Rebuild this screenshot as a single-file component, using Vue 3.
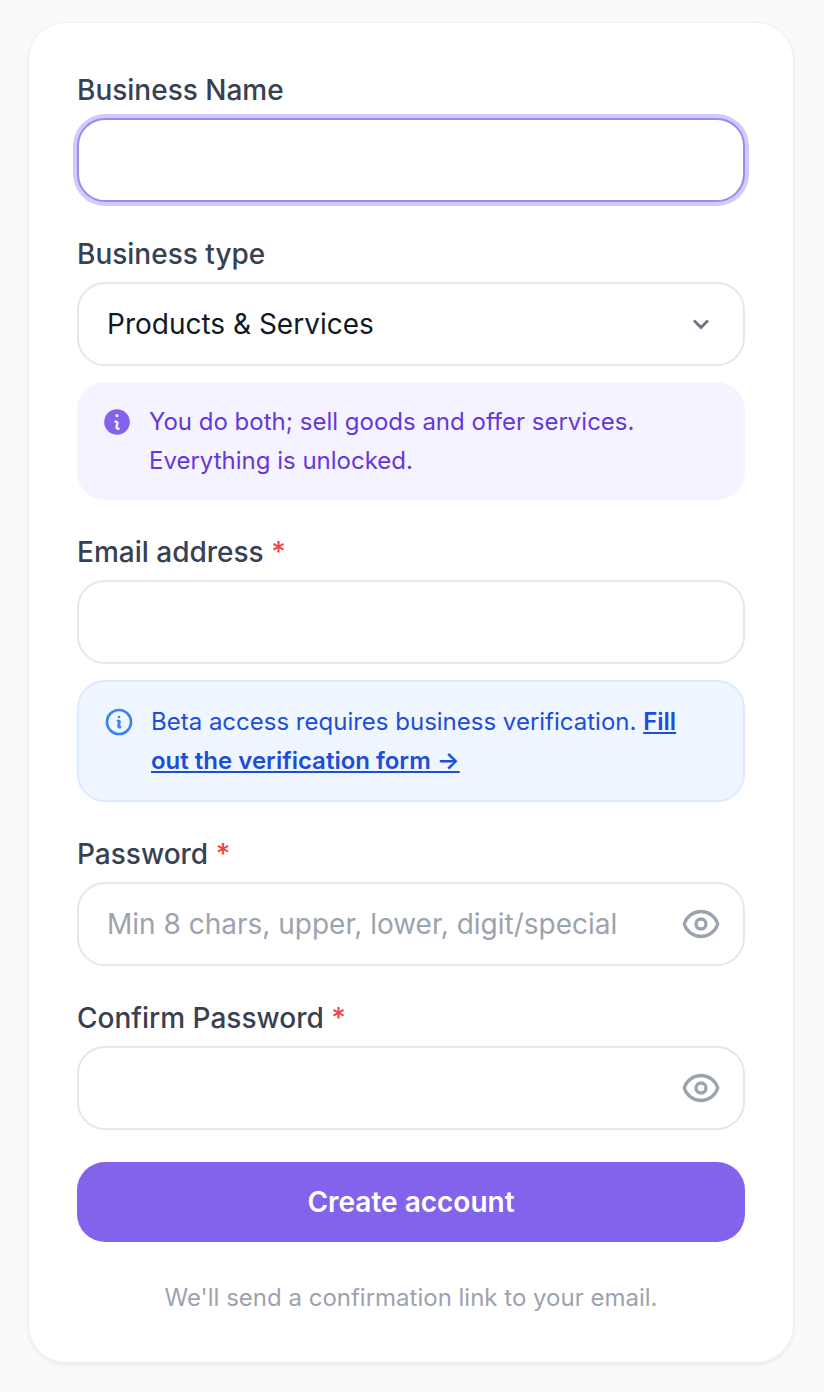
<script setup>
const eyeOuter = "M2.036 12.322a1.012 1.012 0 010-.639C3.423 7.51 7.36 4.5 12 4.5c4.638 0 8.573 3.007 9.963 7.178.07.207.07.431 0 .639C20.577 16.49 16.64 19.5 12 19.5c-4.638 0-8.573-3.007-9.963-7.178z";
const eyeInner = "M15 12a3 3 0 11-6 0 3 3 0 016 0z";
</script>

<template>
  <div class="page">
    <form class="card" @submit.prevent>
      <div class="field">
        <label class="label">Business Name</label>
        <div class="input focused"></div>
      </div>

      <div class="field">
        <label class="label">Business type</label>
        <div class="input select">
          <span>Products &amp; Services</span>
          <svg class="chevron" viewBox="0 0 18 12" fill="none">
            <path d="M2 2.500l7 7 7-7" stroke="#6b7280" stroke-width="2.800" />
          </svg>
        </div>
        <div class="alert purple">
          <svg class="alert-icon" viewBox="0 0 20 20" fill="#8463ec">
            <path
              fill-rule="evenodd"
              clip-rule="evenodd"
              d="M18 10a8 8 0 11-16 0 8 8 0 0116 0zm-7-4a1 1 0 11-2 0 1 1 0 012 0zM9 9a.75.75 0 000 1.5h.253a.25.25 0 01.244.304l-.459 2.066A1.75 1.75 0 0010.747 15H11a.75.75 0 000-1.5h-.253a.25.25 0 01-.244-.304l.459-2.066A1.75 1.75 0 009.253 9H9z"
            />
          </svg>
          <p>You do both; sell goods and offer services.<br />Everything is unlocked.</p>
        </div>
      </div>

      <div class="field">
        <label class="label">Email address <span class="req">*</span></label>
        <div class="input"></div>
        <div class="alert blue">
          <svg class="alert-icon" viewBox="0 0 24 24" fill="none">
            <path
              d="M11.25 11.25l.041-.02a.75.75 0 011.063.852l-.708 2.836a.75.75 0 001.063.853l.041-.021M21 12a9 9 0 11-18 0 9 9 0 0118 0zm-9-3.750h.008v.008H12V8.250z"
              stroke="#3b82f6"
              stroke-width="2"
              stroke-linecap="round"
              stroke-linejoin="round"
            />
          </svg>
          <p>Beta access requires business verification. <a class="link" href="#">Fill out the verification form →</a></p>
        </div>
      </div>

      <div class="field">
        <label class="label">Password <span class="req">*</span></label>
        <div class="input with-eye">
          <span class="placeholder">Min 8 chars, upper, lower, digit/special</span>
          <svg class="eye" viewBox="0 0 24 24" fill="none" stroke="#9ca3af" stroke-width="2" stroke-linecap="round" stroke-linejoin="round">
            <path :d="eyeOuter" />
            <path :d="eyeInner" />
          </svg>
        </div>
      </div>

      <div class="field">
        <label class="label">Confirm Password <span class="req">*</span></label>
        <div class="input with-eye">
          <span></span>
          <svg class="eye" viewBox="0 0 24 24" fill="none" stroke="#9ca3af" stroke-width="2" stroke-linecap="round" stroke-linejoin="round">
            <path :d="eyeOuter" />
            <path :d="eyeInner" />
          </svg>
        </div>
      </div>

      <button class="submit" type="submit">Create account</button>
      <p class="note">We'll send a confirmation link to your email.</p>
    </form>
  </div>
</template>

<style scoped>
.page {
  box-sizing: border-box;
  min-height: 1392px;
  padding: 22px 30px 0 28px;
  background: #f9fafb;
  font-family: Inter, "Liberation Sans", sans-serif;
}
.card {
  box-sizing: border-box;
  height: 1341px;
  padding: 47px 48px 0;
  background: #fff;
  border: 1px solid #f0f1f3;
  border-radius: 38px;
  box-shadow: 0 2px 4px rgba(0, 0, 0, 0.07);
}
.field {
  margin-bottom: 32px;
}
.label {
  display: block;
  margin-bottom: 8px;
  font-size: 28px;
  line-height: 40px;
  font-weight: 500;
  color: #374151;
}
.req {
  color: #ef4444;
}
.input {
  box-sizing: border-box;
  display: flex;
  align-items: center;
  justify-content: space-between;
  height: 84px;
  padding: 0 26px 0 28px;
  border: 2px solid #e5e7eb;
  border-radius: 28px;
  background: #fff;
  font-size: 28px;
  color: #111827;
}
.focused {
  border-color: #9b8aee;
  box-shadow: 0 0 0 4px #d5c9f9;
}
.select {
  padding-right: 33px;
}
.chevron {
  width: 18px;
  height: 12px;
}
.with-eye {
  padding-right: 22px;
}
.placeholder {
  color: #9ca3af;
}
.eye {
  width: 40px;
  height: 40px;
}
.alert {
  display: flex;
  gap: 16px;
  margin-top: 16px;
  padding: 20px 24px;
  border-radius: 28px;
  font-size: 24px;
  line-height: 39px;
}
.alert p {
  margin: 0;
}
.alert-icon {
  flex: none;
  width: 32px;
  height: 32px;
  margin-top: 4px;
}
.purple {
  background: #f5f3ff;
  color: #6638d6;
}
.blue {
  border: 2px solid #dbeafe;
  background: #eff6ff;
  color: #1d4ed8;
}
.link {
  font-weight: 600;
  color: #1d4ed8;
  text-decoration: underline;
}
.submit {
  display: block;
  width: 100%;
  height: 80px;
  border: 0;
  border-radius: 28px;
  background: #8463ec;
  color: #fff;
  font-family: inherit;
  font-size: 28px;
  font-weight: 600;
}
.note {
  margin: 36px 0 0;
  text-align: center;
  font-size: 24px;
  line-height: 40px;
  color: #9ca3af;
}
</style>

<style>
body {
  background: #f9fafb;
}
</style>
